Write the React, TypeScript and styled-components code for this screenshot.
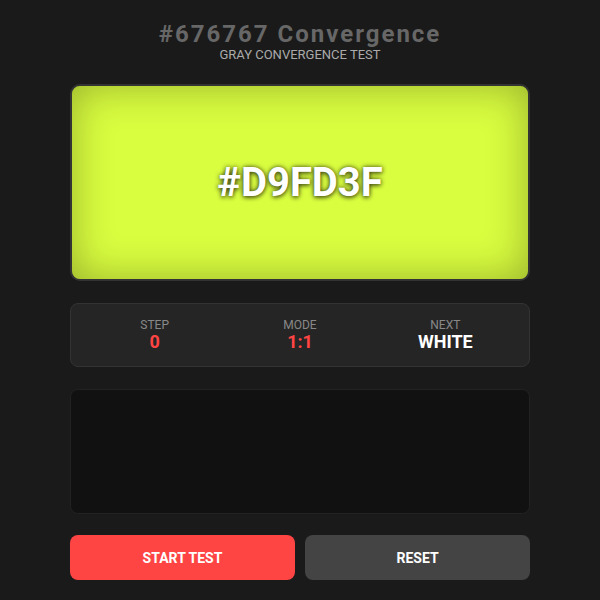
import * as React from "react";
import styled, { createGlobalStyle } from "styled-components";

const GlobalStyle = createGlobalStyle`
  html, body {
    margin: 0;
    padding: 0;
    background: #1a1a1a;
    font-family: Roboto, "Liberation Sans", sans-serif;
  }
`;

const stats = [
  { label: "STEP", value: "0", accent: true },
  { label: "MODE", value: "1:1", accent: true },
  { label: "NEXT", value: "WHITE", accent: false },
];

export default function App() {
  return (
    <>
      <GlobalStyle />
      <Page>
        <Header>
          <Title>#676767 Convergence</Title>
          <Subtitle>GRAY CONVERGENCE TEST</Subtitle>
        </Header>
        <ColorDisplay color="#D9FD3F">
          <HexText>#D9FD3F</HexText>
        </ColorDisplay>
        <StatsPanel>
          {stats.map((s) => (
            <Stat key={s.label}>
              <StatLabel>{s.label}</StatLabel>
              <StatValue accent={s.accent}>{s.value}</StatValue>
            </Stat>
          ))}
        </StatsPanel>
        <Canvas />
        <ButtonRow>
          <Button variant="primary">START TEST</Button>
          <Button variant="secondary">RESET</Button>
        </ButtonRow>
      </Page>
    </>
  );
}

const Page = styled.div`
  width: 460px;
  margin: 0 auto;
  padding-top: 20px;
  display: flex;
  flex-direction: column;
`;

const Header = styled.div`
  display: flex;
  flex-direction: column;
  align-items: center;
  margin-bottom: 22px;
`;

const Title = styled.h1`
  margin: 0;
  font-size: 24px;
  line-height: 28px;
  font-weight: 700;
  letter-spacing: 2px;
  color: #676767;
`;

const Subtitle = styled.div`
  font-size: 13px;
  line-height: 14px;
  color: #aaaaaa;
`;

const ColorDisplay = styled.div<{ color: string }>`
  height: 193px;
  background: ${({ color }) => color};
  border: 2px solid #333333;
  border-radius: 10px;
  box-shadow: inset 0 0 40px rgba(0, 0, 0, 0.3);
  display: flex;
  align-items: center;
  justify-content: center;
  margin-bottom: 22px;
`;

const HexText = styled.div`
  font-size: 40px;
  font-weight: 700;
  color: #ffffff;
  text-shadow: 0 0 5px rgba(0, 0, 0, 0.7), 0 2px 4px rgba(0, 0, 0, 0.4);
`;

const StatsPanel = styled.div`
  height: 64px;
  box-sizing: border-box;
  padding: 0 11px;
  background: #252525;
  border: 1px solid #333333;
  border-radius: 8px;
  display: grid;
  grid-template-columns: repeat(3, 1fr);
  align-items: center;
  margin-bottom: 22px;
`;

const Stat = styled.div`
  display: flex;
  flex-direction: column;
  align-items: center;
`;

const StatLabel = styled.div`
  font-size: 12px;
  line-height: 14px;
  color: #888888;
`;

const StatValue = styled.div<{ accent: boolean }>`
  font-size: 18px;
  line-height: 20px;
  font-weight: 700;
  color: ${({ accent }) => (accent ? "#ff4444" : "#ffffff")};
`;

const Canvas = styled.div`
  height: 125px;
  box-sizing: border-box;
  background: #111111;
  border: 1px solid #222222;
  border-radius: 8px;
  margin-bottom: 21px;
`;

const ButtonRow = styled.div`
  display: grid;
  grid-template-columns: 1fr 1fr;
  gap: 10px;
`;

const Button = styled.button<{ variant: "primary" | "secondary" }>`
  height: 45px;
  border: none;
  border-radius: 8px;
  font-family: Roboto, "Liberation Sans", sans-serif;
  font-size: 14px;
  font-weight: 700;
  color: #ffffff;
  background: ${({ variant }) => (variant === "primary" ? "#ff4444" : "#444444")};
  cursor: pointer;
`;
